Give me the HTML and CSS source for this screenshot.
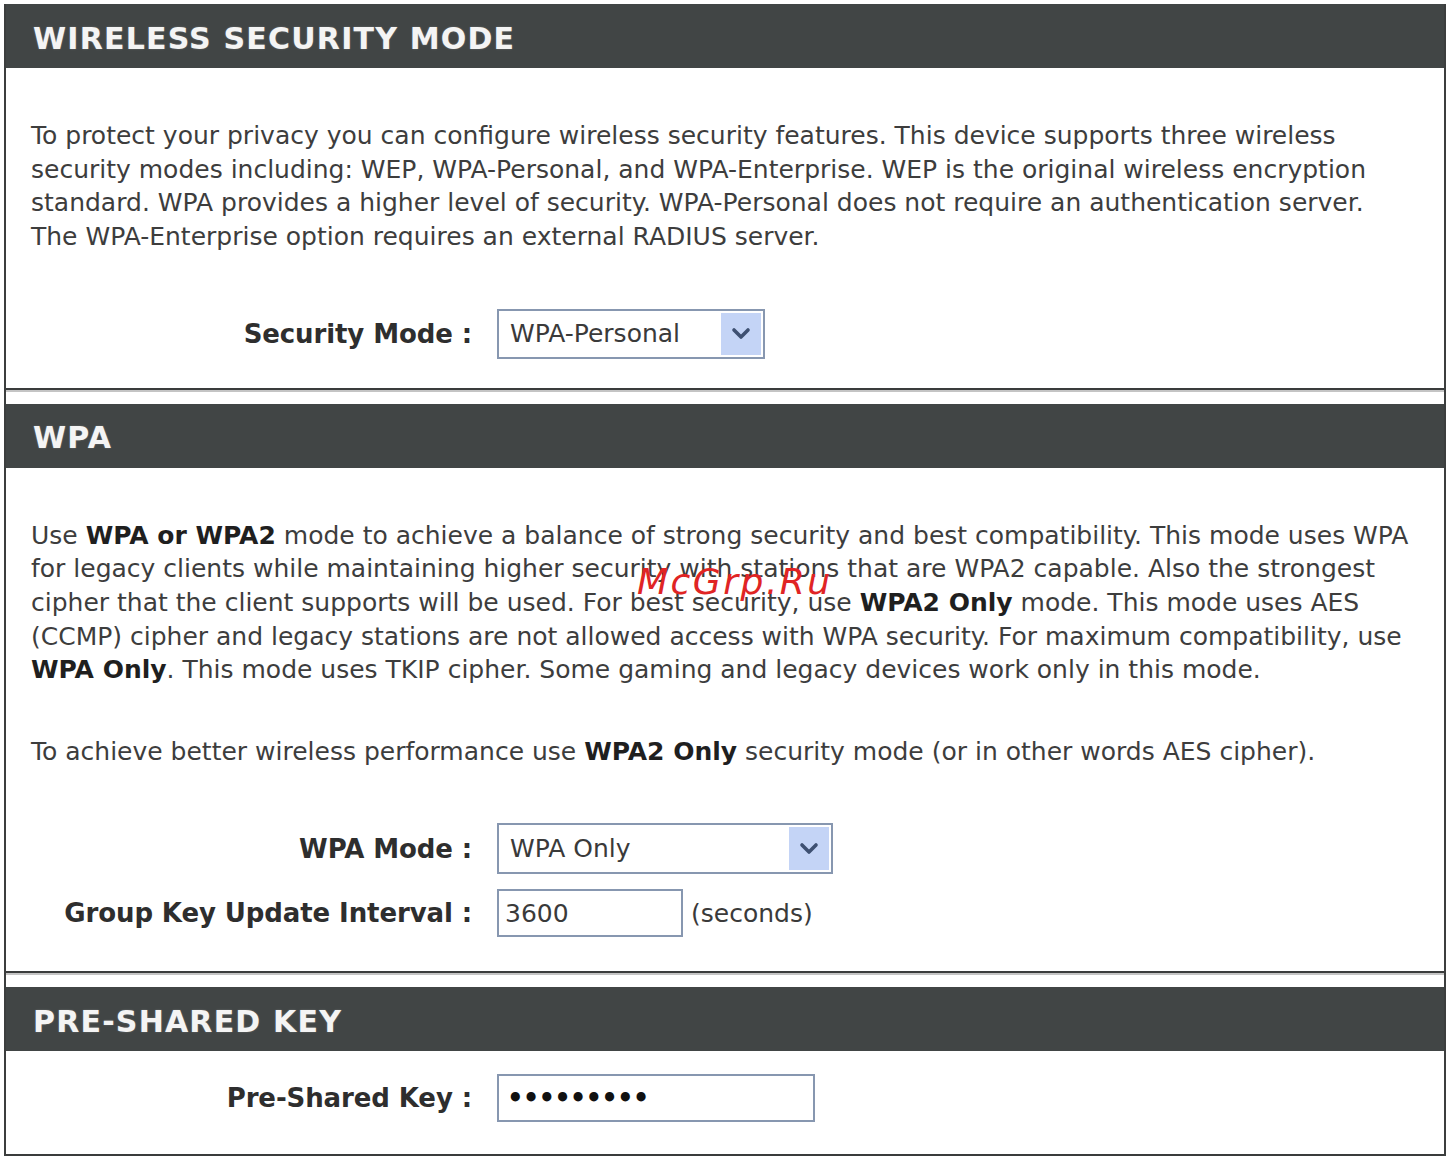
FILE: index.html
```html
<!DOCTYPE html>
<html lang="en">
<head>
<meta charset="utf-8">
<title>Wireless Security Mode</title>
<link rel="stylesheet" href="styles.css">
</head>
<body>
<div class="page">
  <section class="box">
    <h2 class="box-title">WIRELESS SECURITY MODE</h2>
    <div class="box-body box-body-first">
      <p class="desc">To protect your privacy you can configure wireless security features. This device supports three wireless<br>security modes including: WEP, WPA-Personal, and WPA-Enterprise. WEP is the original wireless encryption<br>standard. WPA provides a higher level of security. WPA-Personal does not require an authentication server.<br>The WPA-Enterprise option requires an external RADIUS server.</p>
      <div class="form">
        <div class="form-row">
          <span class="label">Security Mode :</span>
          <div class="field">
            <div class="select select-mode"><span class="select-value">WPA-Personal</span><span class="select-btn"><svg width="20" height="14" viewBox="0 0 20 14"><polyline points="3,3 10,10 17,3" fill="none" stroke="#3e5072" stroke-width="3.6" stroke-linecap="round" stroke-linejoin="round"/></svg></span></div>
          </div>
        </div>
      </div>
    </div>
  </section>

  <section class="box">
    <h2 class="box-title">WPA</h2>
    <div class="box-body box-body-second">
      <p class="desc">Use <b>WPA or WPA2</b> mode to achieve a balance of strong security and best compatibility. This mode uses WPA<br>for legacy clients while maintaining higher security with stations that are WPA2 capable. Also the strongest<br>cipher that the client supports will be used. For best security, use <b>WPA2 Only</b> mode. This mode uses AES<br>(CCMP) cipher and legacy stations are not allowed access with WPA security. For maximum compatibility, use<br><b>WPA Only</b>. This mode uses TKIP cipher. Some gaming and legacy devices work only in this mode.</p>
      <p class="desc">To achieve better wireless performance use <b>WPA2 Only</b> security mode (or in other words AES cipher).</p>
      <div class="form">
        <div class="form-row">
          <span class="label">WPA Mode :</span>
          <div class="field">
            <div class="select select-wpa"><span class="select-value">WPA Only</span><span class="select-btn"><svg width="20" height="14" viewBox="0 0 20 14"><polyline points="3,3 10,10 17,3" fill="none" stroke="#3e5072" stroke-width="3.6" stroke-linecap="round" stroke-linejoin="round"/></svg></span></div>
          </div>
        </div>
        <div class="form-row">
          <span class="label">Group Key Update Interval :</span>
          <div class="field">
            <div class="input input-interval">3600</div>
            <span class="unit">(seconds)</span>
          </div>
        </div>
      </div>
    </div>
  </section>

  <section class="box">
    <h2 class="box-title">PRE-SHARED KEY</h2>
    <div class="box-body box-body-tight">
      <div class="form">
        <div class="form-row">
          <span class="label">Pre-Shared Key :</span>
          <div class="field">
            <div class="input input-key"><span class="dots">•••••••••</span></div>
          </div>
        </div>
      </div>
    </div>
  </section>

  <div class="watermark">McGrp.Ru</div>
</div>
</body>
</html>
```

FILE: styles.css
```css
html, body {
  margin: 0;
  padding: 0;
  background: #ffffff;
}

.page {
  position: relative;
  box-sizing: border-box;
  width: 1442px;
  margin: 4px 0 0 4px;
  border-left: 2px solid #3c3e3e;
  border-right: 2px solid #3c3e3e;
  font-family: "DejaVu Sans", Verdana, sans-serif;
  color: #3d3d3d;
}

.box {
  border-bottom: 2px solid #3a3c3c;
  box-shadow: 0 2px 0 #c4c4c4;
  margin-bottom: 14px;
}

.box:last-of-type {
  margin-bottom: 0;
}

.box-title {
  margin: 0;
  height: 64px;
  box-sizing: border-box;
  padding: 4px 0 0 27px;
  display: flex;
  align-items: center;
  background: #414545;
  color: #f4f4f4;
  font-family: "DejaVu Sans", Verdana, sans-serif;
  font-weight: bold;
  font-size: 30px;
  letter-spacing: 1.2px;
  text-shadow: 0 0 2px rgba(255,255,255,0.25);
}

.box-body {
  padding: 51px 0 24px 25px;
}

.box-body-first {
  padding-bottom: 22px;
}

.box-body-second {
  padding-bottom: 26px;
}

.box-body-tight {
  padding-top: 14px;
}

.desc {
  margin: 0;
  font-size: 25px;
  line-height: 33.6px;
  letter-spacing: 0;
  white-space: nowrap;
}

.desc + .desc {
  margin-top: 48px;
}

.desc b {
  color: #1f1f1f;
}

.box-body > .desc ~ .form {
  margin-top: 48px;
}

.form-row {
  display: grid;
  grid-template-columns: 441px auto;
  column-gap: 25px;
  align-items: center;
  height: 64.5px;
}

.label {
  text-align: right;
  font-weight: bold;
  font-size: 26px;
  letter-spacing: -0.1px;
  color: #2e2e2e;
  white-space: nowrap;
}

.field {
  display: flex;
  align-items: center;
  gap: 8px;
}

.select,
.input {
  box-sizing: border-box;
  display: flex;
  align-items: center;
  background: #ffffff;
  border: 2px solid #8797b0;
  font-size: 25px;
  color: #3a3a3a;
  white-space: nowrap;
}

.select {
  position: relative;
  height: 50px;
  padding-left: 11px;
}

.select-mode {
  width: 268px;
}

.select-wpa {
  width: 336px;
  height: 51px;
}

.select-value {
  flex: 1;
}

.select-btn {
  align-self: stretch;
  width: 40px;
  margin: 2px;
  display: flex;
  align-items: center;
  justify-content: center;
  background: #c4d4f6;
}

.input {
  height: 48px;
  padding-left: 6px;
}

.input-interval {
  width: 186px;
}

.input-key {
  width: 318px;
  padding-left: 8px;
}

.dots {
  font-size: 26px;
  font-weight: bold;
  letter-spacing: -0.9px;
  color: #111111;
}

.unit {
  font-size: 25px;
  color: #3a3a3a;
}

.watermark {
  position: absolute;
  left: 631px;
  top: 558px;
  font-size: 36px;
  line-height: 40px;
  font-style: oblique;
  letter-spacing: 2.5px;
  color: #e02424;
  pointer-events: none;
}
```
